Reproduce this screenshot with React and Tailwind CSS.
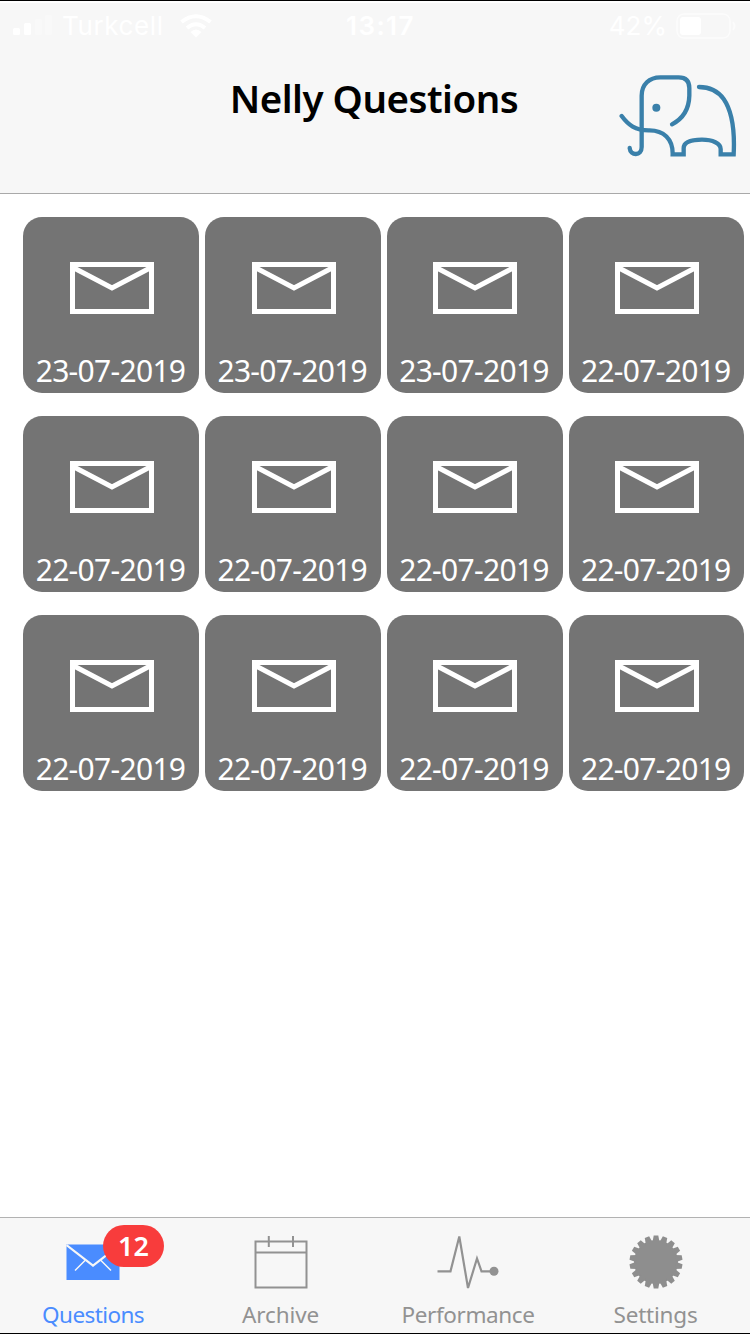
import React from "react";

const DATES = [
  "23-07-2019", "23-07-2019", "23-07-2019", "22-07-2019",
  "22-07-2019", "22-07-2019", "22-07-2019", "22-07-2019",
  "22-07-2019", "22-07-2019", "22-07-2019", "22-07-2019",
];

function StatusBar() {
  return (
    <div className="grid h-[48px] grid-cols-3 items-center border-t-2 border-white font-['Inter',sans-serif] text-[26px] leading-none text-white">
      <div className="flex items-center pl-[13px]">
        <svg className="h-6 w-[39px]" viewBox="0 0 39 24" fill="currentColor">
          <rect x="0" y="14" width="7" height="7" rx="1.5" />
          <rect x="11" y="9" width="7" height="12" rx="1.5" />
          <rect x="22" y="5" width="7" height="16" rx="1.5" opacity="0.3" />
          <rect x="32" y="1" width="7" height="20" rx="1.5" opacity="0.3" />
        </svg>
        <span className="ml-[10px] tracking-[0.6px]">Turkcell</span>
        <svg className="ml-4 h-6 w-8" viewBox="0 0 32 24" fill="none" stroke="currentColor" strokeWidth="4">
          <path d="M1.5 8Q16 -3.5 30.5 8M7 14Q16 6.5 25 14" />
          <path d="M10.5 18Q16 13 21.5 18L16 23.5Z" fill="currentColor" stroke="none" />
        </svg>
      </div>
      <span className="pl-[11px] text-center font-semibold tracking-[1.4px]">13:17</span>
      <div className="flex items-center justify-end pr-[14px]">
        <span>42%</span>
        <svg className="ml-[9px] h-[26px] w-[60px]" viewBox="0 0 60 26" fill="none" stroke="currentColor">
          <rect x="1" y="1" width="53" height="24" rx="7" strokeWidth="1.5" opacity="0.6" />
          <rect x="4" y="4" width="21" height="18" rx="3" fill="currentColor" stroke="none" />
          <path d="M57 9Q60 13 57 17" strokeWidth="2" opacity="0.6" />
        </svg>
      </div>
    </div>
  );
}

function Elephant() {
  return (
    <svg
      className="h-[85px] w-[120px]"
      viewBox="50 40 360 255"
      fill="none"
      stroke="#3a80aa"
      strokeWidth="13"
      strokeLinecap="round"
      strokeLinejoin="miter"
    >
      <path d="M88 265C90 289 124 290 124 262V108C124 74 147 53 180 53H235C257 53 267 65 267 85V108C266 148 246 178 215 194" />
      <path d="M64 169C84 196 105 212 145 212C190 211 218 238 217 284H250V266C250 247 274 240 305 240C337 240 361 251 361 268V284H400C403 225 397 157 370 118C351 92 328 82 296 82" />
      <circle cx="168" cy="144" r="12" fill="#3a80aa" stroke="none" />
    </svg>
  );
}

function Card({ date }) {
  return (
    <div className="flex h-[175.5px] w-[175.75px] flex-col items-center rounded-[19px] bg-[#747474] pt-[44.5px] text-white">
      <svg className="ml-px h-[52px] w-[84px]" viewBox="0 0 84 52" fill="none" stroke="currentColor" strokeWidth="5">
        <rect x="2.5" y="2.5" width="79" height="47" />
        <path d="M3 5.5L42 26L81 5.5" />
      </svg>
      <span className="mr-[1.5px] mt-[41px] whitespace-nowrap text-[30px] leading-[32px] tracking-[-0.7px]">{date}</span>
    </div>
  );
}

function QuestionsIcon() {
  return (
    <svg className="mr-px h-[54px] w-[54px]" viewBox="0 0 54 54" fill="none" stroke="#f7f7f7">
      <rect x="0.5" y="9.5" width="53" height="35.5" fill="#4a8cff" stroke="none" />
      <path d="M0.5 10L27 30.5L53.5 10" strokeWidth="2.2" />
      <path d="M19.5 25L9 35.5M34.5 25L45 35.5" strokeWidth="1.5" />
    </svg>
  );
}

function ArchiveIcon() {
  return (
    <svg className="mr-px h-[54px] w-[54px]" viewBox="0 0 54 54" fill="none" stroke="#929292" strokeWidth="2">
      <path d="M1.5 6.5H52.5V52.5H1.5ZM1.5 17.5H52.5M14.8 1V12M39 1V12" />
    </svg>
  );
}

function PerformanceIcon() {
  return (
    <svg className="mr-[2px] h-[54px] w-[62px]" viewBox="0 0 62 54" fill="none" stroke="#929292" strokeWidth="2.2">
      <path d="M0.5 36.3H13.5L22.3 1.5L31 53L40 23.5L44.5 36.3H56" />
      <circle cx="57" cy="36.2" r="4.5" fill="#929292" stroke="none" />
    </svg>
  );
}

const TEETH = Array.from({ length: 18 }, (_, i) => i * 20);

function SettingsIcon() {
  return (
    <svg className="mr-px h-[54px] w-[54px]" viewBox="0 0 54 54" fill="#8e8e8e">
      <circle cx="27" cy="27" r="22" />
      {TEETH.map((angle) => (
        <path key={angle} d="M23.5 7L24.7 0.5H29.3L30.5 7Z" transform={`rotate(${angle} 27 27)`} />
      ))}
    </svg>
  );
}

function Tab({ icon, label, className, badge }) {
  return (
    <div className={`relative flex flex-1 flex-col items-center pt-[16.5px] text-[22.5px] leading-[30px] ${className}`}>
      {icon}
      <span className="mr-[1.5px] mt-[11.5px] whitespace-nowrap">{label}</span>
      {badge && (
        <span className="absolute left-[103px] top-[7px] flex h-[42px] w-[61px] items-center justify-center rounded-full bg-[#f83c3c] text-[27px] font-semibold tracking-normal text-white">
          {badge}
        </span>
      )}
    </div>
  );
}

export default function App() {
  return (
    <div className="flex h-[1334px] w-[750px] flex-col overflow-hidden border-y border-black bg-white font-['Noto_Sans',sans-serif]">
      <header className="h-[193px] shrink-0 border-b border-[#a9a9a9] bg-[#f7f7f7]">
        <StatusBar />
        <div className="grid grid-cols-[150px_1fr_150px] pt-[23px]">
          <h1 className="col-start-2 whitespace-nowrap pr-[2px] text-center text-[38.5px] font-semibold leading-[52px] tracking-[-0.5px] text-black">
            Nelly Questions
          </h1>
          <div className="pl-[17px] pt-px">
            <Elephant />
          </div>
        </div>
      </header>
      <main className="flex-1 pl-[23.4px] pt-[23px]">
        <div className="grid grid-cols-[repeat(4,175.75px)] gap-x-[6px] gap-y-[23.5px]">
          {DATES.map((date, i) => (
            <Card key={i} date={date} />
          ))}
        </div>
      </main>
      <nav className="flex h-[116px] shrink-0 border-t border-[#b2b2b2] bg-[#f7f7f7]">
        <Tab icon={<QuestionsIcon />} label="Questions" className="text-[#4a8cff] tracking-[-0.6px]" badge="12" />
        <Tab icon={<ArchiveIcon />} label="Archive" className="text-[#929292] tracking-[-0.1px]" />
        <Tab icon={<PerformanceIcon />} label="Performance" className="text-[#929292] tracking-[-0.4px]" />
        <Tab icon={<SettingsIcon />} label="Settings" className="text-[#929292] tracking-[-0.2px]" />
      </nav>
    </div>
  );
}
